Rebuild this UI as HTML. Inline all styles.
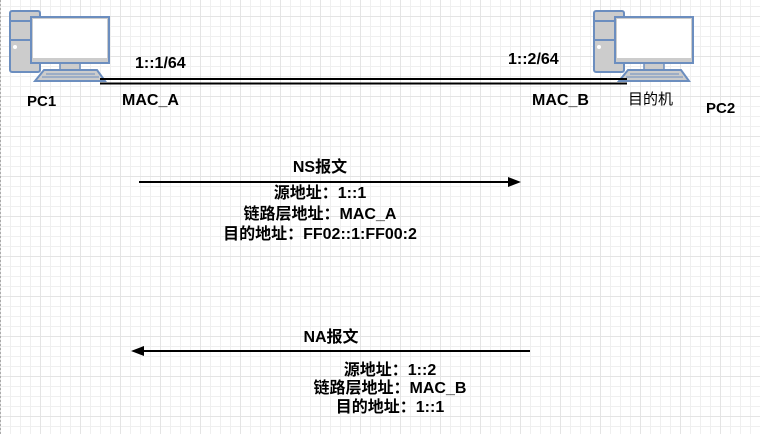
<!DOCTYPE html>
<html><head><meta charset="utf-8"><style>
body{margin:0;width:760px;height:434px;overflow:hidden;background:#fff;
background-image:linear-gradient(#e4e4e4 1px,transparent 1px),linear-gradient(90deg,#e4e4e4 1px,transparent 1px),linear-gradient(#efefef 1px,transparent 1px),linear-gradient(90deg,#efefef 1px,transparent 1px);
background-size:40px 40px,40px 40px,10px 10px,10px 10px;background-position:0 16px,0 0,0 6px,0 0;}
svg{position:absolute;left:0;top:0}
text{font-family:"Liberation Sans","Noto Sans CJK SC",sans-serif;font-size:16px;font-weight:bold;fill:#000}
</style></head><body>
<svg width="760" height="434" viewBox="0 0 760 434">
<defs>
<g id="pc">
<rect x="10" y="11" width="30" height="61" rx="2" fill="#ccc" stroke="#6c8ebf" stroke-width="2"/>
<line x1="10" y1="21" x2="40" y2="21" stroke="#6c8ebf" stroke-width="2"/>
<line x1="10" y1="40" x2="40" y2="40" stroke="#6c8ebf" stroke-width="2"/>
<circle cx="15" cy="47" r="2" fill="#fff"/>
<rect x="60" y="62" width="20" height="9" fill="#ccc" stroke="#6c8ebf" stroke-width="1.5"/>
<rect x="31" y="17" width="78" height="46" fill="#ccc" stroke="#6c8ebf" stroke-width="2"/>
<rect x="33" y="19" width="74" height="39" fill="#fff"/>
<path d="M44 70 L97 70 L105 81 L35 81 Z" fill="#ccc" stroke="#6c8ebf" stroke-width="2"/>
<line x1="46" y1="74" x2="95" y2="74" stroke="#6c8ebf" stroke-width="1"/>
<line x1="42" y1="77" x2="99" y2="77" stroke="#6c8ebf" stroke-width="1"/>
</g>
</defs>
<use href="#pc"/>
<use href="#pc" transform="translate(584,0)"/>
<line x1="100" y1="79" x2="627" y2="79" stroke="#000" stroke-width="2"/>
<line x1="100" y1="83.5" x2="627" y2="83.5" stroke="#000" stroke-width="2"/>
<text x="27" y="106" style="font-size:15px">PC1</text>
<text x="135" y="68">1::1/64</text>
<text x="122" y="105">MAC_A</text>
<text x="508" y="64">1::2/64</text>
<text x="532" y="105">MAC_B</text>
<text x="628" y="104" style="font-weight:normal;font-size:15px">目的机</text>
<text x="706" y="113" style="font-size:15px">PC2</text>
<line x1="139" y1="182" x2="510" y2="182" stroke="#000" stroke-width="2"/>
<path d="M521 182 L508 177 L508 187 Z" fill="#000"/>
<g text-anchor="middle">
<text x="320" y="172">NS报文</text>
<text x="320" y="198">源地址：1::1</text>
<text x="320" y="219">链路层地址：MAC_A</text>
<text x="320" y="239">目的地址：FF02::1:FF00:2</text>
<text x="331" y="342">NA报文</text>
<text x="390" y="375">源地址：1::2</text>
<text x="390" y="393">链路层地址：MAC_B</text>
<text x="390" y="412">目的地址：1::1</text>
</g>
<line x1="141" y1="351" x2="530" y2="351" stroke="#000" stroke-width="2"/>
<path d="M131 351 L144 346 L144 356 Z" fill="#000"/>
<line x1="0.5" y1="0" x2="0.5" y2="434" stroke="#aaa" stroke-dasharray="2,2"/>
</svg>
</body></html>
